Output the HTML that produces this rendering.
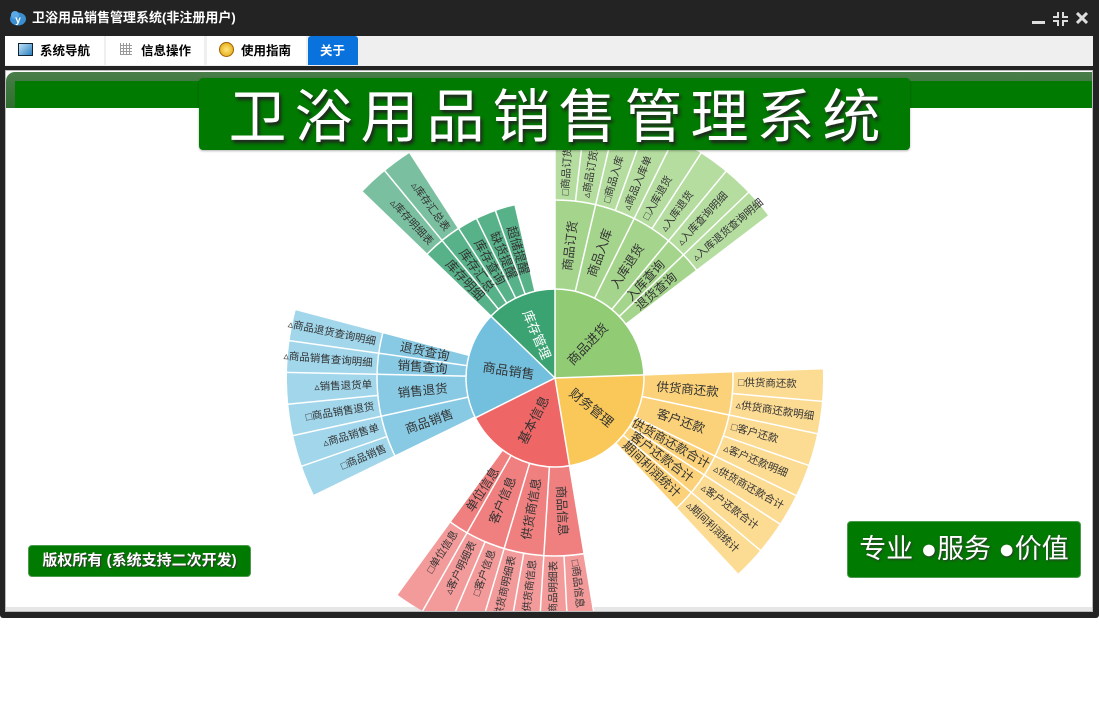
<!DOCTYPE html>
<html><head><meta charset="utf-8">
<style>
*{margin:0;padding:0;box-sizing:border-box}
body{width:1099px;height:723px;background:#fff;position:relative;overflow:hidden;font-family:"Liberation Sans","Noto Sans CJK SC",sans-serif}
.abs{position:absolute}
</style></head><body>
<!-- window frame -->
<div class="abs" style="left:0;top:0;width:1099px;height:618px;background:#232323;border-radius:0 0 3px 3px"></div>
<!-- title -->
<svg class="abs" style="left:9px;top:10px" width="18" height="16" viewBox="0 0 18 16">
<ellipse cx="9" cy="9" rx="8" ry="6.5" fill="#3b8fd0"/><circle cx="6" cy="5" r="4" fill="#5aa8e6"/>
<text x="9" y="13" font-size="10" font-weight="bold" fill="#fff" text-anchor="middle" font-family="Liberation Sans">y</text></svg>
<div class="abs" style="left:32px;top:10px;color:#fff;font-weight:bold;font-size:13px;line-height:16px">卫浴用品销售管理系统(非注册用户)</div>
<!-- window buttons -->
<div class="abs" style="left:1032px;top:21px;width:13px;height:3px;background:#ddd"></div>
<svg class="abs" style="left:1053px;top:12px" width="15" height="14" viewBox="0 0 15 14"><g stroke="#ddd" stroke-width="2" fill="none"><path d="M5 0V5H0M10 0V5H15M5 14V9H0M10 14V9H15"/></g></svg>
<svg class="abs" style="left:1076px;top:12px" width="12" height="12" viewBox="0 0 12 12"><path d="M1 1L11 11M11 1L1 11" stroke="#ddd" stroke-width="3"/></svg>
<!-- tab bar -->
<div class="abs" style="left:5px;top:36px;width:1088px;height:30px;background:#efefef"></div>
<div class="abs" style="left:5px;top:36px;width:99px;height:29px;background:#fff"></div>
<div class="abs" style="left:106px;top:36px;width:98px;height:29px;background:#fff"></div>
<div class="abs" style="left:207px;top:36px;width:99px;height:29px;background:#fff"></div>
<div class="abs" style="left:308px;top:36px;width:50px;height:29px;background:#0a72dc;border-radius:3px 3px 0 0"></div>
<div class="abs" style="left:18px;top:43px;width:15px;height:13px;border:1px solid #123;background:linear-gradient(135deg,#bfe2f8,#2a7fc0)"></div>
<div class="abs" style="left:120px;top:43px;width:12px;height:12px;background:repeating-linear-gradient(90deg,#999 0 1px,transparent 1px 3px),repeating-linear-gradient(0deg,#999 0 1px,#fff 1px 3px)"></div>
<div class="abs" style="left:219px;top:42px;width:15px;height:15px;border-radius:50%;background:radial-gradient(#ffe680,#e0a000);border:1px solid #a06000"></div>
<div class="abs" style="left:40px;top:43px;font-size:12.5px;font-weight:bold;line-height:16px">系统导航</div>
<div class="abs" style="left:141px;top:43px;font-size:12.5px;font-weight:bold;line-height:16px">信息操作</div>
<div class="abs" style="left:241px;top:43px;font-size:12.5px;font-weight:bold;line-height:16px">使用指南</div>
<div class="abs" style="left:320px;top:43px;font-size:12.5px;font-weight:bold;line-height:16px;color:#fff">关于</div>
<!-- content -->
<div class="abs" style="left:5px;top:70px;width:1088px;height:542px;background:#fff;border:1px solid #bbb;overflow:hidden">
 <div class="abs" style="left:0;bottom:0;width:100%;height:4px;background:#e6e6e6"></div>
 <svg class="abs" style="left:-5px;top:-70px" width="1099" height="680">
 <g transform="translate(554,377)" fill="none">
  <!-- inner ring r 44.5 w 89 -->
  <g stroke-width="89">
   <circle r="44.5" stroke="#91cc75" stroke-dasharray="68.35 999" transform="rotate(-90)"/>
   <circle r="44.5" stroke="#fac858" stroke-dasharray="64.16 999" transform="rotate(-2)"/>
   <circle r="44.5" stroke="#ee6666" stroke-dasharray="56.54 999" transform="rotate(80.6)"/>
   <circle r="44.5" stroke="#73c0de" stroke-dasharray="54.84 999" transform="rotate(153.4)"/>
   <circle r="44.5" stroke="#3ba272" stroke-dasharray="35.73 999" transform="rotate(224)"/>
  </g>
  <!-- ring2 r133.5 -->
  <g stroke-width="89">
   <g stroke="#a5d58c">
   <circle r="133.5" stroke-dasharray="30.76 999" transform="rotate(-90)"/>
   <circle r="133.5" stroke-dasharray="30.76 999" transform="rotate(-76.8)"/>
   <circle r="133.5" stroke-dasharray="30.76 999" transform="rotate(-63.6)"/>
   <circle r="133.5" stroke-dasharray="15.38 999" transform="rotate(-50.4)"/>
   <circle r="133.5" stroke-dasharray="15.38 999" transform="rotate(-43.8)"/>
   </g>
   <g stroke="#fbd279">
   <circle r="133.5" stroke-dasharray="32.62 999" transform="rotate(-2)"/>
   <circle r="133.5" stroke-dasharray="32.62 999" transform="rotate(12)"/>
   <circle r="133.5" stroke-dasharray="16.31 999" transform="rotate(26)"/>
   <circle r="133.5" stroke-dasharray="16.31 999" transform="rotate(33)"/>
   <circle r="133.5" stroke-dasharray="16.31 999" transform="rotate(40)"/>
   </g>
   <g stroke="#f08080">
   <circle r="133.5" stroke-dasharray="30.29 999" transform="rotate(80.6)"/>
   <circle r="133.5" stroke-dasharray="30.29 999" transform="rotate(93.6)"/>
   <circle r="133.5" stroke-dasharray="30.29 999" transform="rotate(106.6)"/>
   <circle r="133.5" stroke-dasharray="15.15 999" transform="rotate(119.6)"/>
   </g>
   <g stroke="#88cae4">
   <circle r="133.5" stroke-dasharray="31.69 999" transform="rotate(154)"/>
   <circle r="133.5" stroke-dasharray="31.69 999" transform="rotate(167.6)"/>
   <circle r="133.5" stroke-dasharray="15.84 999" transform="rotate(181.2)"/>
   <circle r="133.5" stroke-dasharray="15.84 999" transform="rotate(188)"/>
   </g>
   <g stroke="#58b289">
   <circle r="133.5" stroke-dasharray="76.9 999" transform="rotate(224)"/>
   </g>
  </g>
  <!-- ring3 r223 w90 -->
  <g stroke-width="90">
   <circle r="223" stroke="#b5dda0" stroke-dasharray="205.5 9999" transform="rotate(-90)"/>
   <circle r="223" stroke="#fcdb93" stroke-dasharray="190.7 9999" transform="rotate(-2)"/>
   <circle r="223" stroke="#f39a9a" stroke-dasharray="177.1 9999" transform="rotate(80.6)"/>
   <circle r="223" stroke="#a1d6eb" stroke-dasharray="158.8 9999" transform="rotate(154)"/>
   <circle r="223" stroke="#7ac0a0" stroke-dasharray="51.4 9999" transform="rotate(224)"/>
  </g>
  <!-- separators -->
  <g stroke="#fff" stroke-width="1.5">
   <circle r="89"/><circle r="178"/>
   <g>
    <line x1="0" y1="0" x2="0" y2="-89" transform="rotate(0)"/>
    <line x1="0" y1="0" x2="0" y2="-89" transform="rotate(88)"/>
    <line x1="0" y1="0" x2="0" y2="-89" transform="rotate(170.6)"/>
    <line x1="0" y1="0" x2="0" y2="-89" transform="rotate(243.4)"/>
    <line x1="0" y1="0" x2="0" y2="-89" transform="rotate(314)"/>
   </g>
   <g>
    <line y1="-89" y2="-178" transform="rotate(0)"/><line y1="-89" y2="-178" transform="rotate(13.2)"/><line y1="-89" y2="-178" transform="rotate(26.4)"/><line y1="-89" y2="-178" transform="rotate(39.6)"/><line y1="-89" y2="-178" transform="rotate(46.2)"/><line y1="-89" y2="-178" transform="rotate(52.8)"/>
    <line y1="-89" y2="-178" transform="rotate(88)"/><line y1="-89" y2="-178" transform="rotate(102)"/><line y1="-89" y2="-178" transform="rotate(116)"/><line y1="-89" y2="-178" transform="rotate(123)"/><line y1="-89" y2="-178" transform="rotate(130)"/><line y1="-89" y2="-178" transform="rotate(137)"/>
    <line y1="-89" y2="-178" transform="rotate(170.6)"/><line y1="-89" y2="-178" transform="rotate(183.6)"/><line y1="-89" y2="-178" transform="rotate(196.6)"/><line y1="-89" y2="-178" transform="rotate(209.6)"/><line y1="-89" y2="-178" transform="rotate(216.1)"/>
    <line y1="-89" y2="-178" transform="rotate(244)"/><line y1="-89" y2="-178" transform="rotate(257.6)"/><line y1="-89" y2="-178" transform="rotate(271.2)"/><line y1="-89" y2="-178" transform="rotate(278)"/><line y1="-89" y2="-178" transform="rotate(284.8)"/>
    <line y1="-89" y2="-178" transform="rotate(314)"/><line y1="-89" y2="-178" transform="rotate(320.6)"/><line y1="-89" y2="-178" transform="rotate(327.2)"/><line y1="-89" y2="-178" transform="rotate(333.8)"/><line y1="-89" y2="-178" transform="rotate(340.4)"/><line y1="-89" y2="-178" transform="rotate(347)"/>
   </g>
   <g>
    <line y1="-178" y2="-270" transform="rotate(0)"/><line y1="-178" y2="-270" transform="rotate(6.6)"/><line y1="-178" y2="-270" transform="rotate(13.2)"/><line y1="-178" y2="-270" transform="rotate(19.8)"/><line y1="-178" y2="-270" transform="rotate(26.4)"/><line y1="-178" y2="-270" transform="rotate(33)"/><line y1="-178" y2="-270" transform="rotate(39.6)"/><line y1="-178" y2="-270" transform="rotate(46.2)"/><line y1="-178" y2="-270" transform="rotate(52.8)"/>
    <line y1="-178" y2="-270" transform="rotate(88)"/><line y1="-178" y2="-270" transform="rotate(95)"/><line y1="-178" y2="-270" transform="rotate(102)"/><line y1="-178" y2="-270" transform="rotate(109)"/><line y1="-178" y2="-270" transform="rotate(116)"/><line y1="-178" y2="-270" transform="rotate(123)"/><line y1="-178" y2="-270" transform="rotate(130)"/><line y1="-178" y2="-270" transform="rotate(137)"/>
    <line y1="-178" y2="-270" transform="rotate(170.6)"/><line y1="-178" y2="-270" transform="rotate(177.1)"/><line y1="-178" y2="-270" transform="rotate(183.6)"/><line y1="-178" y2="-270" transform="rotate(190.1)"/><line y1="-178" y2="-270" transform="rotate(196.6)"/><line y1="-178" y2="-270" transform="rotate(203.1)"/><line y1="-178" y2="-270" transform="rotate(209.6)"/><line y1="-178" y2="-270" transform="rotate(216.1)"/>
    <line y1="-178" y2="-270" transform="rotate(244)"/><line y1="-178" y2="-270" transform="rotate(250.8)"/><line y1="-178" y2="-270" transform="rotate(257.6)"/><line y1="-178" y2="-270" transform="rotate(264.4)"/><line y1="-178" y2="-270" transform="rotate(271.2)"/><line y1="-178" y2="-270" transform="rotate(278)"/><line y1="-178" y2="-270" transform="rotate(284.8)"/>
    <line y1="-178" y2="-270" transform="rotate(314)"/><line y1="-178" y2="-270" transform="rotate(320.6)"/><line y1="-178" y2="-270" transform="rotate(327.2)"/>
   </g>
  </g>
  <!-- labels -->
  <g font-family="'Liberation Sans','Noto Sans CJK SC',sans-serif" fill="#333" stroke="none" dominant-baseline="central">
   <g font-size="13" text-anchor="middle">
    <text transform="rotate(44) translate(0,-47) rotate(-90)">商品进货</text>
    <text transform="rotate(129.3) translate(0,-47) rotate(-90)">财务管理</text>
    <text transform="rotate(207) translate(0,-47) rotate(90)">基本信息</text>
    <text transform="rotate(278.7) translate(0,-47) rotate(90)">商品销售</text>
    <text fill="#fff" transform="rotate(337) translate(0,-47) rotate(90)">库存管理</text>
   </g>
   <g font-size="12.5" text-anchor="middle">
    <text transform="rotate(6.6) translate(0,-133) rotate(-90)">商品订货</text>
    <text transform="rotate(19.8) translate(0,-133) rotate(-90)">商品入库</text>
    <text transform="rotate(33) translate(0,-133) rotate(-90)">入库退货</text>
    <text transform="rotate(42.9) translate(0,-133) rotate(-90)">入库查询</text>
    <text transform="rotate(49.5) translate(0,-133) rotate(-90)">退货查询</text>
    <text transform="rotate(95) translate(0,-133) rotate(-90)">供货商还款</text>
    <text transform="rotate(109) translate(0,-133) rotate(-90)">客户还款</text>
    <text transform="rotate(119.5) translate(0,-133) rotate(-90)">供货商还款合计</text>
    <text transform="rotate(126.5) translate(0,-133) rotate(-90)">客户还款合计</text>
    <text transform="rotate(133.5) translate(0,-133) rotate(-90)">期间利润统计</text>
    <text transform="rotate(177.1) translate(0,-133) rotate(-90)">商品信息</text>
    <text transform="rotate(190.1) translate(0,-133) rotate(90)">供货商信息</text>
    <text transform="rotate(203.1) translate(0,-133) rotate(90)">客户信息</text>
    <text transform="rotate(212.85) translate(0,-133) rotate(90)">单位信息</text>
    <text transform="rotate(250.8) translate(0,-133) rotate(90)">商品销售</text>
    <text transform="rotate(264.4) translate(0,-133) rotate(90)">销售退货</text>
    <text transform="rotate(274.6) translate(0,-133) rotate(90)">销售查询</text>
    <text transform="rotate(281.4) translate(0,-133) rotate(90)">退货查询</text>
    <text transform="rotate(317.3) translate(0,-133) rotate(90)">库存明细</text>
    <text transform="rotate(323.9) translate(0,-133) rotate(90)">库存汇总</text>
    <text transform="rotate(330.5) translate(0,-133) rotate(90)">库存查询</text>
    <text transform="rotate(337.1) translate(0,-133) rotate(90)">缺货提醒</text>
    <text transform="rotate(343.7) translate(0,-133) rotate(90)">超储提醒</text>
   </g>
   <g font-size="10.5" text-anchor="start">
    <text transform="rotate(3.3) translate(0,-183) rotate(-90)">□商品订货</text>
    <text transform="rotate(9.9) translate(0,-183) rotate(-90)">▵商品订货单</text>
    <text transform="rotate(16.5) translate(0,-183) rotate(-90)">□商品入库</text>
    <text transform="rotate(23.1) translate(0,-183) rotate(-90)">▵商品入库单</text>
    <text transform="rotate(29.7) translate(0,-183) rotate(-90)">□入库退货</text>
    <text transform="rotate(36.3) translate(0,-183) rotate(-90)">▵入库退货</text>
    <text transform="rotate(42.9) translate(0,-183) rotate(-90)">▵入库查询明细</text>
    <text transform="rotate(49.5) translate(0,-183) rotate(-90)">▵入库退货查询明细</text>
    <text transform="rotate(91.5) translate(0,-183) rotate(-90)">□供货商还款</text>
    <text transform="rotate(98.5) translate(0,-183) rotate(-90)">▵供货商还款明细</text>
    <text transform="rotate(105.5) translate(0,-183) rotate(-90)">□客户还款</text>
    <text transform="rotate(112.5) translate(0,-183) rotate(-90)">▵客户还款明细</text>
    <text transform="rotate(119.5) translate(0,-183) rotate(-90)">▵供货商还款合计</text>
    <text transform="rotate(126.5) translate(0,-183) rotate(-90)">▵客户还款合计</text>
    <text transform="rotate(133.5) translate(0,-183) rotate(-90)">▵期间利润统计</text>
    <text transform="rotate(173.85) translate(0,-183) rotate(-90)">□商品信息</text>
   </g>
   <g font-size="10.5" text-anchor="end">
    <text transform="rotate(180.35) translate(0,-183) rotate(90)">▵商品明细表</text>
    <text transform="rotate(186.85) translate(0,-183) rotate(90)">▵供货商信息</text>
    <text transform="rotate(193.35) translate(0,-183) rotate(90)">▵供货商明细表</text>
    <text transform="rotate(199.85) translate(0,-183) rotate(90)">□客户信息</text>
    <text transform="rotate(206.35) translate(0,-183) rotate(90)">▵客户明细表</text>
    <text transform="rotate(212.85) translate(0,-183) rotate(90)">□单位信息</text>
    <text transform="rotate(247.4) translate(0,-183) rotate(90)">□商品销售</text>
    <text transform="rotate(254.2) translate(0,-183) rotate(90)">▵商品销售单</text>
    <text transform="rotate(261) translate(0,-183) rotate(90)">□商品销售退货</text>
    <text transform="rotate(267.8) translate(0,-183) rotate(90)">▵销售退货单</text>
    <text transform="rotate(274.6) translate(0,-183) rotate(90)">▵商品销售查询明细</text>
    <text transform="rotate(281.4) translate(0,-183) rotate(90)">▵商品退货查询明细</text>
    <text transform="rotate(317.3) translate(0,-183) rotate(90)">▵库存明细表</text>
    <text transform="rotate(323.9) translate(0,-183) rotate(90)">▵库存汇总表</text>
   </g>
  </g>
 </g>
 </svg>
</div>
<!-- green header -->
<div class="abs" style="left:6px;top:72px;width:1086px;height:36px;background:linear-gradient(#4a7d4a,#2f6e2f);border-radius:9px 0 0 0"></div>
<div class="abs" style="left:15px;top:81px;width:1077px;height:27px;background:#007a00"></div>
<div class="abs" style="left:199px;top:78px;width:711px;height:72px;background:#007a00;border-radius:4px;box-shadow:0 1px 2px rgba(0,0,0,.3)"></div>
<div class="abs" style="left:199px;top:78px;width:711px;height:72px;color:#fff;font-size:58px;line-height:80px;text-align:center;letter-spacing:8px;text-indent:8px;font-family:'Liberation Sans','Noto Sans CJK SC',sans-serif;text-shadow:2px 3px 3px #222">卫浴用品销售管理系统</div>
<!-- badges -->
<div class="abs" style="left:28px;top:545px;width:223px;height:32px;background:#007a00;border-radius:4px;border:1px solid #4c9a4c;color:#fff;font-weight:bold;font-size:15px;line-height:30px;text-align:center;text-shadow:1px 1px 1px #333;white-space:nowrap">版权所有 (系统支持二次开发)</div>
<div class="abs" style="left:847px;top:521px;width:234px;height:57px;background:#007a00;border-radius:4px;border:1px solid #4c9a4c;color:#fff;font-size:27px;line-height:55px;text-align:center;text-shadow:1px 1px 2px #333;white-space:nowrap">专业 ●服务 ●价值</div>
</body></html>
